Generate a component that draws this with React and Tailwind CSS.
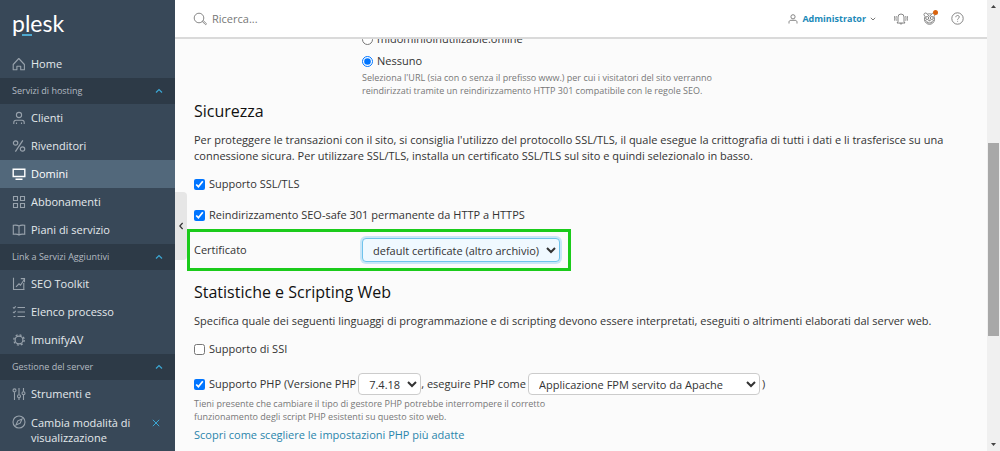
import { useState } from "react";

// ============================
// NAVIGATION DATA
// ============================
const NAV = [
  { items: [{ label: "Home", icon: HomeIcon }] },
  {
    title: "Servizi di hosting",
    items: [
      { label: "Clienti", icon: UserIcon },
      { label: "Rivenditori", icon: PercentIcon },
      { label: "Domini", icon: ScreenIcon },
      { label: "Abbonamenti", icon: GridIcon },
      { label: "Piani di servizio", icon: BookIcon },
    ],
  },
  {
    title: "Link a Servizi Aggiuntivi",
    items: [
      { label: "SEO Toolkit", icon: ChartIcon },
      { label: "Elenco processo", icon: ChecklistIcon },
      { label: "ImunifyAV", icon: GearIcon },
    ],
  },
  {
    title: "Gestione del server",
    items: [{ label: "Strumenti e", icon: SlidersIcon }],
  },
];

export default function App() {
  const [active, setActive] = useState("Domini");

  return (
    <div className="flex h-screen overflow-hidden bg-[#fbfbfb] font-['Open_Sans',sans-serif] text-[11px] leading-4 text-[#333]">
      <Sidebar active={active} onSelect={setActive} />

      <div className="flex min-w-0 flex-1 flex-col">
        <TopBar />
        <div className="flex min-h-0 flex-1 overflow-hidden">
          {/* COLLAPSE HANDLE */}
          <div className="flex w-3 shrink-0 items-start pt-[153px]">
            <button
              aria-label="Comprimi menu"
              className="flex h-[68px] w-full items-center justify-center rounded-r bg-[#e6e6e6] text-[#333]"
            >
              <Icon className="h-2 w-1" viewBox="0 0 4 8" strokeWidth="1.2">
                <path d="M3.6 1 .8 4l2.8 3" />
              </Icon>
            </button>
          </div>
          <HostingSettings />
        </div>
      </div>

      <ScrollTrack />
    </div>
  );
}

// ============================
// SIDEBAR
// ============================
function Sidebar({ active, onSelect }) {
  return (
    <aside className="flex w-[175px] shrink-0 flex-col bg-[#384858] text-[#e4e8ec]">
      <a
        href="#home"
        className="relative ml-3 flex h-[50px] shrink-0 items-center self-start pb-1 font-[Lato] text-[23px] text-white"
      >
        plesk
        <span className="absolute top-[34px] left-[10px] h-[2px] w-[10px] bg-[#4fa9cf]" />
      </a>

      <nav className="min-h-0 flex-1 overflow-hidden">
        {NAV.map((group, i) => (
          <div key={i}>
            {group.title && (
              <button className="flex h-[26px] w-full items-center justify-between bg-[#2d3a47] px-3 text-[9px] text-[#b4bbc2]">
                {group.title}
                <Icon className="h-2 w-2 text-[#3ba7d4]" viewBox="0 0 8 8" strokeWidth="1.2">
                  <path d="M1 5.5 4 2.5l3 3" />
                </Icon>
              </button>
            )}
            {group.items.map(({ label, icon: Glyph }) => (
              <a
                key={label}
                href="#nav"
                onClick={() => onSelect(label)}
                className={`flex h-7 items-center gap-[5px] pl-3 ${
                  label === active ? "bg-[#52687b] text-white" : ""
                }`}
              >
                <span className={label === active ? "text-white" : "text-[#98a2ac]"}>
                  <Glyph />
                </span>
                {label}
              </a>
            ))}
          </div>
        ))}
      </nav>

      {/* VIEW MODE */}
      <div className="flex shrink-0 items-start gap-[5px] py-1.5 pr-[15px] pl-3">
        <span className="text-[#98a2ac]">
          <CompassIcon />
        </span>
        <a href="#mode" className="flex-1 leading-[15px]">
          Cambia modalità di visualizzazione
        </a>
        <button aria-label="Chiudi" className="pt-1 text-[#3ba7d4]">
          <Icon className="h-2 w-2" viewBox="0 0 8 8">
            <path d="m.8.8 6.4 6.4M7.2.8.8 7.2" />
          </Icon>
        </button>
      </div>
    </aside>
  );
}

// ============================
// TOP BAR
// ============================
function TopBar() {
  return (
    <header className="flex h-[39px] shrink-0 items-center border-b-2 border-[#dadada] bg-white pr-[23px] pl-[18px] text-[#777]">
      <label htmlFor="search" aria-label="Ricerca">
        <Icon className="h-[14px] w-[14px] text-[#888]" viewBox="0 0 14 14">
          <circle cx="6" cy="6" r="4.8" />
          <path d="m9.4 9.6 1-.9 2.8 2.8c.3.3.3.6 0 .9s-.7.3-1 0z" />
        </Icon>
      </label>
      <input
        id="search"
        type="text"
        placeholder="Ricerca..."
        className="ml-[5px] min-w-0 flex-1 outline-none placeholder:text-[#777]"
      />

      <button className="flex items-center text-[9px] font-bold text-[#2089b8]">
        <Icon className="mr-1 h-[10px] w-[10px] text-[#777]" viewBox="0 0 10 10" strokeWidth="0.9">
          <circle cx="5" cy="2.8" r="2.1" />
          <path d="M1 9.5V8.2C1 7 1.8 6.3 3 6.3h4c1.2 0 2 .7 2 1.9v1.3" />
        </Icon>
        Administrator
        <Icon className="ml-1 h-[6px] w-[6px] text-[#777]" viewBox="0 0 6 6">
          <path d="m.8 1.8 2.2 2.2 2.2-2.2" />
        </Icon>
      </button>

      <button aria-label="Notifiche" className="ml-[18px]">
        <Icon className="h-[14px] w-[14px]" viewBox="0 0 14 14" strokeWidth="0.9">
          <path d="M3 11h8l-1-1.5V5a3 3 0 0 0-6 0v4.5zM6 11.2c0 1.3 2 1.3 2 0M2.5 4.300c-.7 1.300-.7 2.900 0 4.200M11.500 4.300c.7 1.300.7 2.900 0 4.200M.9 4c-.7 1.500-.7 3.300 0 4.800M13.100 4c.7 1.500.7 3.300 0 4.800" />
        </Icon>
      </button>

      <button aria-label="Consigli" className="relative ml-[15px]">
        <Icon className="h-[13px] w-[13px]" viewBox="0 0 13 13" strokeWidth="0.9">
          <path d="M2.2 4.200C.4 3.800.6 1 2.500 1c.9 0 1.500.5 1.700 1.200 1.400-.5 3.200-.5 4.600 0C9 1.500 9.600 1 10.500 1c1.900 0 2.100 2.800.3 3.200M2.200 4.200C1 6.500 1.300 9.200 3.200 11c1.800 1.700 4.800 1.700 6.600 0 1.900-1.800 2.200-4.500 1-6.800" />
          <circle cx="4.2" cy="6" r="1.5" />
          <circle cx="8.8" cy="6" r="1.5" />
          <path d="M5.600 8.200h1.800l-.9 1zM1.800 8.200c1.200.2 2 .8 2.300 2 .8 1 4 1 4.800 0 .3-1.200 1.100-1.800 2.300-2M4.500 2.400l2 2 2-2" />
        </Icon>
        <span className="absolute -top-0.5 -right-0.5 h-[5px] w-[5px] rounded-full bg-[#d9630d]" />
      </button>

      <button aria-label="Guida" className="ml-[15px]">
        <Icon className="h-[13px] w-[13px]" viewBox="0 0 13 13" strokeWidth="0.9">
          <circle cx="6.5" cy="6.5" r="5.7" />
          <path d="M4.800 5.200c0-2.300 3.500-2.200 3.500-.2 0 1.300-1.700 1.300-1.700 2.700M6.600 8.900v.8" />
        </Icon>
      </button>
    </header>
  );
}

// ============================
// HOSTING SETTINGS
// ============================
function HostingSettings() {
  const [domain, setDomain] = useState("none");

  return (
    <main className="min-w-0 flex-1 pr-10 pl-[7px]">
      {/* PREFERRED DOMAIN */}
      <div className="-mt-2 pl-[168px]">
        <Choice
          type="radio"
          name="domain"
          label="midominioinutilizable.online"
          checked={domain === "main"}
          onChange={() => setDomain("main")}
        />
        <div className="mt-1.5">
          <Choice
            type="radio"
            name="domain"
            label="Nessuno"
            checked={domain === "none"}
            onChange={() => setDomain("none")}
          />
        </div>
        <p className="mt-0.5 max-w-[380px] text-[9px] leading-[13px] text-[#777]">
          Seleziona l'URL (sia con o senza il prefisso www.) per cui i visitatori del sito verranno
          reindirizzati tramite un reindirizzamento HTTP 301 compatibile con le regole SEO.
        </p>
      </div>

      {/* SECURITY */}
      <h2 className="mt-0.5 text-base leading-6 font-medium text-[#111]">Sicurezza</h2>
      <p className="mt-[9px]">
        Per proteggere le transazioni con il sito, si consiglia l'utilizzo del protocollo SSL/TLS, il
        quale esegue la crittografia di tutti i dati e li trasferisce su una connessione sicura. Per
        utilizzare SSL/TLS, installa un certificato SSL/TLS sul sito e quindi selezionalo in basso.
      </p>
      <div className="mt-3">
        <Choice type="checkbox" label="Supporto SSL/TLS" defaultChecked />
      </div>
      <div className="mt-[15px]">
        <Choice
          type="checkbox"
          label="Reindirizzamento SEO-safe 301 permanente da HTTP a HTTPS"
          defaultChecked
        />
      </div>
      <div className="mt-1.5 -ml-[7px] flex w-[384px] items-center border-[3px] border-[#1bcb1b] px-1 py-1.5">
        <label htmlFor="cert" className="w-[168px] shrink-0">
          Certificato
        </label>
        <select
          id="cert"
          className="mr-1 h-6 min-w-0 flex-1 rounded-sm border border-[#6fc3ec] bg-[#f0f9ff] pl-1.5 ring-2 ring-[#c9e6f8]"
        >
          <option>default certificate (altro archivio)</option>
        </select>
      </div>

      {/* STATISTICS AND SCRIPTING */}
      <h2 className="mt-[9px] text-base leading-6 font-medium text-[#111]">
        Statistiche e Scripting Web
      </h2>
      <p className="mt-[9px]">
        Specifica quale dei seguenti linguaggi di programmazione e di scripting devono essere
        interpretati, eseguiti o altrimenti elaborati dal server web.
      </p>
      <div className="mt-3">
        <Choice type="checkbox" label="Supporto di SSI" />
      </div>
      <div className="mt-4 flex items-center">
        <Choice type="checkbox" label="Supporto PHP (Versione PHP" defaultChecked />
        <select
          aria-label="Versione PHP"
          className="ml-0.5 h-[22px] w-[63px] rounded-sm border border-[#ccc] bg-white pl-1.5"
        >
          <option>7.4.18</option>
        </select>
        <span>, eseguire PHP come</span>
        <select
          aria-label="Gestore PHP"
          className="ml-0.5 h-[22px] w-[232px] rounded-sm border border-[#ccc] bg-white pl-1.5"
        >
          <option>Applicazione FPM servito da Apache</option>
        </select>
        <span className="ml-0.5">)</span>
      </div>
      <p className="mt-0.5 max-w-[380px] text-[9px] leading-[13px] text-[#777]">
        Tieni presente che cambiare il tipo di gestore PHP potrebbe interrompere il corretto
        funzionamento degli script PHP esistenti su questo sito web.
      </p>
      <a href="#php" className="mt-1 inline-block text-[#2a85ab]">
        Scopri come scegliere le impostazioni PHP più adatte
      </a>
    </main>
  );
}

function Choice({ label, ...props }) {
  return (
    <label className="flex items-center gap-1">
      <input {...props} className="h-[11px] w-[11px] accent-[#0075ff]" />
      {label}
    </label>
  );
}

// ============================
// SCROLL TRACK
// ============================
function ScrollTrack() {
  return (
    <div className="flex w-[13px] shrink-0 flex-col items-center bg-[#f0f0f0] py-1 text-[#444]">
      <svg className="h-[5px] w-[5px] fill-current" viewBox="0 0 5 4">
        <path d="M0 3.5 2.5.5 5 3.5z" />
      </svg>
      <div className="flex w-full flex-1 flex-col px-px">
        <div className="grow-[134]" />
        <div className="grow-[193] bg-[#a8a8a8]" />
        <div className="grow-[106]" />
      </div>
      <svg className="h-[5px] w-[5px] fill-current" viewBox="0 0 5 4">
        <path d="M0 .5h5L2.5 3.5z" />
      </svg>
    </div>
  );
}

// ============================
// ICONS
// ============================
function Icon({ className = "h-[14px] w-[14px]", viewBox = "0 0 14 14", strokeWidth = "1", children }) {
  return (
    <svg
      className={className}
      viewBox={viewBox}
      fill="none"
      stroke="currentColor"
      strokeWidth={strokeWidth}
    >
      {children}
    </svg>
  );
}

function HomeIcon() {
  return (
    <Icon strokeWidth="1.1">
      <path d="M1.200 7.500v5.200h3.700V9.200h3.800v3.500h3.700V7.500L6.800 1.500z" strokeLinejoin="round" />
    </Icon>
  );
}

function UserIcon() {
  return (
    <Icon strokeWidth="1.1">
      <circle cx="7" cy="4" r="2.6" />
      <path d="M1.800 12.900v-1.500c0-1.300.9-2.200 2.200-2.200h6c1.300 0 2.200.9 2.200 2.200v1.500M4.500 12.900v-1.500M9.500 12.900v-1.500" />
    </Icon>
  );
}

function PercentIcon() {
  return (
    <Icon strokeWidth="1.2">
      <circle cx="3.6" cy="4" r="2.2" />
      <circle cx="10.5" cy="10" r="2.2" />
      <path d="M10.800 1.300 3.400 12.700" />
    </Icon>
  );
}

function ScreenIcon() {
  return (
    <Icon strokeWidth="1.4">
      <path d="M1.200 2.200h11.600v7.300H1.200zM3.500 12.200h7" />
    </Icon>
  );
}

function GridIcon() {
  return (
    <Icon strokeWidth="1.1">
      <path d="M1.500 1.500h4v4h-4zM8.500 1.500h4v4h-4zM1.500 8.500h4v4h-4zM8.500 8.500h4v4h-4z" />
    </Icon>
  );
}

function BookIcon() {
  return (
    <Icon strokeWidth="1.1">
      <path d="M7 3C5.500 2 3 2 1.300 2.300v9C3 11 5.500 11 7 12c1.500-1 4-1 5.700-.7v-9C11 2 8.500 2 7 3zM7 3v9" />
    </Icon>
  );
}

function ChartIcon() {
  return (
    <Icon strokeWidth="1.1">
      <path d="M1.500.8v11.700h11M4 9.800l3-3 1.500 1.400 3.800-5.700M8.800 1.600h3.700v3.700M11.800 6v6" />
    </Icon>
  );
}

function ChecklistIcon() {
  return (
    <Icon strokeWidth="1.1">
      <path d="M5.500 2.500h7.500M5.500 7h7.500M5.500 11.500h7.500M1 2.300l1 1 1.700-2M1 6.800l1 1 1.700-2M1.500 11.500h2" />
    </Icon>
  );
}

function GearIcon() {
  return (
    <Icon>
      <circle cx="7" cy="7" r="3.9" strokeWidth="1.2" />
      <circle cx="7" cy="7" r="5.2" strokeWidth="1.3" strokeDasharray="2 2.084" />
    </Icon>
  );
}

function SlidersIcon() {
  return (
    <Icon strokeWidth="1.1">
      <path d="M2.500 5.200V13M7 1v6.500M7 10.800V13M11.500 1v3.500M11.500 7.800V13" />
      <circle cx="2.5" cy="3.4" r="1.5" />
      <circle cx="7" cy="9.2" r="1.5" />
      <circle cx="11.5" cy="6.2" r="1.5" />
    </Icon>
  );
}

function CompassIcon() {
  return (
    <Icon strokeWidth="1.1">
      <circle cx="7" cy="7" r="6" />
      <path d="m10 4-1.800 4.200L4 10l1.800-4.200z" />
    </Icon>
  );
}
